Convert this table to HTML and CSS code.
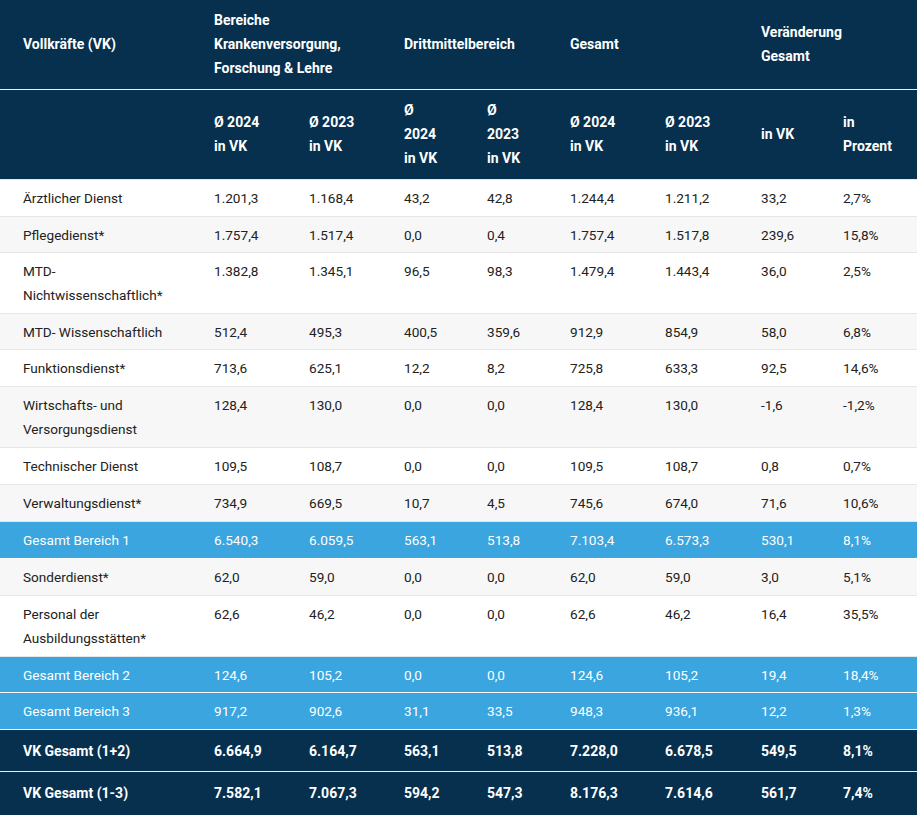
FILE: index.html
```html
<!DOCTYPE html>
<html lang="de">
<head>
<meta charset="utf-8">
<title>Vollkräfte</title>
<link rel="stylesheet" href="styles.css">
</head>
<body>
<table class="vk-table">
  <colgroup>
    <col class="c0"><col class="c1"><col class="c2"><col class="c3"><col class="c4"><col class="c5"><col class="c6"><col class="c7"><col class="c8">
  </colgroup>
  <thead>
    <tr class="head-top">
      <th>Vollkräfte (VK)</th>
      <th colspan="2">Bereiche Krankenversorgung, Forschung &amp; Lehre</th>
      <th colspan="2">Drittmittelbereich</th>
      <th colspan="2">Gesamt</th>
      <th colspan="2">Veränderung Gesamt</th>
    </tr>
    <tr class="head-sub">
      <th></th>
      <th>Ø 2024 in VK</th>
      <th>Ø 2023 in VK</th>
      <th>Ø 2024 in VK</th>
      <th>Ø 2023 in VK</th>
      <th>Ø 2024 in VK</th>
      <th>Ø 2023 in VK</th>
      <th>in VK</th>
      <th>in Prozent</th>
    </tr>
  </thead>
  <tbody>
    <tr class="row"><td>Ärztlicher Dienst</td><td>1.201,3</td><td>1.168,4</td><td>43,2</td><td>42,8</td><td>1.244,4</td><td>1.211,2</td><td>33,2</td><td>2,7%</td></tr>
    <tr class="row alt short"><td>Pflegedienst*</td><td>1.757,4</td><td>1.517,4</td><td>0,0</td><td>0,4</td><td>1.757,4</td><td>1.517,8</td><td>239,6</td><td>15,8%</td></tr>
    <tr class="row"><td>MTD- Nichtwissenschaftlich*</td><td>1.382,8</td><td>1.345,1</td><td>96,5</td><td>98,3</td><td>1.479,4</td><td>1.443,4</td><td>36,0</td><td>2,5%</td></tr>
    <tr class="row alt short"><td>MTD- Wissenschaftlich</td><td>512,4</td><td>495,3</td><td>400,5</td><td>359,6</td><td>912,9</td><td>854,9</td><td>58,0</td><td>6,8%</td></tr>
    <tr class="row"><td>Funktionsdienst*</td><td>713,6</td><td>625,1</td><td>12,2</td><td>8,2</td><td>725,8</td><td>633,3</td><td>92,5</td><td>14,6%</td></tr>
    <tr class="row alt"><td>Wirtschafts- und Versorgungsdienst</td><td>128,4</td><td>130,0</td><td>0,0</td><td>0,0</td><td>128,4</td><td>130,0</td><td>-1,6</td><td>-1,2%</td></tr>
    <tr class="row"><td>Technischer Dienst</td><td>109,5</td><td>108,7</td><td>0,0</td><td>0,0</td><td>109,5</td><td>108,7</td><td>0,8</td><td>0,7%</td></tr>
    <tr class="row alt"><td>Verwaltungsdienst*</td><td>734,9</td><td>669,5</td><td>10,7</td><td>4,5</td><td>745,6</td><td>674,0</td><td>71,6</td><td>10,6%</td></tr>
    <tr class="row sum"><td>Gesamt Bereich 1</td><td>6.540,3</td><td>6.059,5</td><td>563,1</td><td>513,8</td><td>7.103,4</td><td>6.573,3</td><td>530,1</td><td>8,1%</td></tr>
    <tr class="row alt"><td>Sonderdienst*</td><td>62,0</td><td>59,0</td><td>0,0</td><td>0,0</td><td>62,0</td><td>59,0</td><td>3,0</td><td>5,1%</td></tr>
    <tr class="row"><td>Personal der Ausbildungsstätten*</td><td>62,6</td><td>46,2</td><td>0,0</td><td>0,0</td><td>62,6</td><td>46,2</td><td>16,4</td><td>35,5%</td></tr>
    <tr class="row sum short"><td>Gesamt Bereich 2</td><td>124,6</td><td>105,2</td><td>0,0</td><td>0,0</td><td>124,6</td><td>105,2</td><td>19,4</td><td>18,4%</td></tr>
    <tr class="row sum"><td>Gesamt Bereich 3</td><td>917,2</td><td>902,6</td><td>31,1</td><td>33,5</td><td>948,3</td><td>936,1</td><td>12,2</td><td>1,3%</td></tr>
    <tr class="row total"><td>VK Gesamt (1+2)</td><td>6.664,9</td><td>6.164,7</td><td>563,1</td><td>513,8</td><td>7.228,0</td><td>6.678,5</td><td>549,5</td><td>8,1%</td></tr>
    <tr class="row total last"><td>VK Gesamt (1-3)</td><td>7.582,1</td><td>7.067,3</td><td>594,2</td><td>547,3</td><td>8.176,3</td><td>7.614,6</td><td>561,7</td><td>7,4%</td></tr>
  </tbody>
</table>
</body>
</html>
```
FILE: styles.css
```css
html, body {
  margin: 0;
  padding: 0;
  background: #ffffff;
}
body {
  font-family: Roboto, "Liberation Sans", Arial, sans-serif;
  font-size: 13.6px;
  line-height: 24px;
  color: #222222;
}
.vk-table {
  width: 917px;
  border-collapse: collapse;
  table-layout: fixed;
}
.c0 { width: 191px; }
.c1 { width: 95px; }
.c2 { width: 95px; }
.c3 { width: 83px; }
.c4 { width: 83px; }
.c5 { width: 95px; }
.c6 { width: 96px; }
.c7 { width: 82px; }
.c8 { width: 97px; }

.vk-table th {
  background: #06304e;
  color: #ffffff;
  font-size: 14px;
  font-weight: 700;
  text-align: left;
  vertical-align: middle;
  padding: 8px 23px 9px 23px;
}
.head-top th {
  border-bottom: 1px solid #e8eef3;
}
.head-sub th {
  border-bottom: 1px solid #e3e9ee;
}
.vk-table td {
  padding: 6px 23px 6px 23px;
  vertical-align: top;
  text-align: left;
  border-bottom: 1px solid #e6e6e6;
  background: #ffffff;
}
.row.short td {
  padding-bottom: 5px;
}
.row.alt td {
  background: #f7f7f7;
}
.row.sum td {
  background: #3aa5de;
  color: #ffffff;
  border-bottom: 1px solid #ffffff;
}
.row.total td {
  background: #06304e;
  color: #ffffff;
  font-size: 14px;
  font-weight: 700;
  padding-top: 9px;
  padding-bottom: 8px;
  border-bottom: 1px solid #e8eef3;
}
.row.total.last td {
  border-bottom: none;
  padding-bottom: 10px;
}
```
